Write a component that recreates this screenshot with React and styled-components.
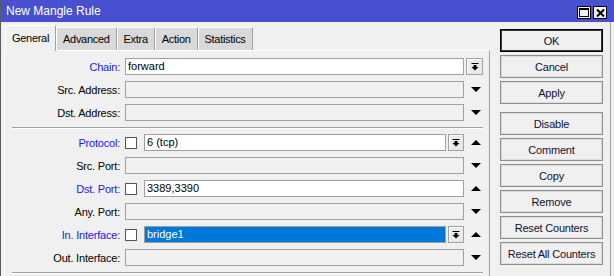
import React from 'react';
import styled, { createGlobalStyle } from 'styled-components';

const GlobalStyle = createGlobalStyle`
  html, body { margin:0; padding:0; background:#f0f0f0; }
  body { font-family:"Liberation Sans", Arial, sans-serif; font-size:11px; color:#000; }
`;

const Window = styled.div`
  width:614px;
  height:276px;
  overflow:hidden;
  display:flex;
  flex-direction:column;
  box-sizing:border-box;
  border-left:1px solid #5a5a5a;
`;

const TitleBar = styled.div`
  height:22px;
  flex:none;
  background:#4950d0;
  display:flex;
  align-items:center;
  justify-content:space-between;
  padding:0 7px 0 5px;
  color:#fff;
  font-size:12px;
`;

const WinButtons = styled.div`
  display:flex;
  gap:2px;
  margin-top:3px;
`;

const WinButton = styled.div`
  width:14px;
  height:13px;
  box-sizing:border-box;
  border:1px solid #000;
  background:#f0f0f0;
  display:flex;
  align-items:center;
  justify-content:center;
`;

const Body = styled.div`
  flex:1;
  display:flex;
  margin-right:3px;
  border-right:1px solid #a0a0a0;
`;

const Left = styled.div`
  width:489px;
  flex:none;
  display:flex;
  flex-direction:column;
`;

const TabStrip = styled.div`
  height:28px;
  flex:none;
  display:flex;
  align-items:flex-end;
  padding-left:4px;
`;

const Tab = styled.div`
  position:relative;
  z-index:${p => (p.$active ? 1 : 0)};
  box-sizing:border-box;
  height:${p => (p.$active ? '26px' : '23px')};
  margin-bottom:${p => (p.$active ? '-1px' : '0')};
  padding:${p => (p.$active ? '5px 6px 0' : '4px 6px 0')};
  background:${p => (p.$active ? '#f0f0f0' : '#d9d9d9')};
  border-top:1px solid #fff;
  border-left:1px solid #fff;
  border-right:1px solid #a0a0a0;
  font-size:11px;
  letter-spacing:-0.3px;
  line-height:14px;
`;

const Panel = styled.div`
  flex:1;
  margin-left:3px;
  box-sizing:border-box;
  border-top:1px solid #fff;
  border-left:1px solid #fff;
  border-right:1px solid #a0a0a0;
  padding:7px 6px 0 0;
`;

const Row = styled.div`
  display:flex;
  align-items:center;
  height:17px;
  margin-bottom:6px;
`;

const Label = styled.div`
  width:115px;
  flex:none;
  text-align:right;
  letter-spacing:-0.2px;
  color:${p => (p.$blue ? '#1a1ae6' : '#000')};
  white-space:nowrap;
`;

const Field = styled.div`
  flex:1;
  display:flex;
  align-items:center;
  height:17px;
  margin-left:5px;
`;

const Check = styled.div`
  width:12px;
  height:12px;
  flex:none;
  box-sizing:border-box;
  border:1px solid #555;
  background:#fff;
  margin-right:7px;
`;

const Input = styled.div`
  flex:1;
  height:17px;
  box-sizing:border-box;
  border:1px solid #a0a0a0;
  background:${p => (p.$selected ? '#0078d7' : p.$filled ? '#fff' : '#f0f0f0')};
  color:${p => (p.$selected ? '#fff' : '#000')};
  padding-left:2px;
  line-height:15px;
  white-space:nowrap;
  overflow:hidden;
`;

const Drop = styled.div`
  width:${p => (p.$wide ? '17px' : '16px')};
  height:17px;
  flex:none;
  margin-left:2px;
  box-sizing:border-box;
  border:1px solid #a0a0a0;
  background:#eaeaea;
  box-shadow:inset 1px 1px 0 #fff;
  display:flex;
  align-items:center;
  justify-content:center;
`;

const Trail = styled.div`
  width:19px;
  flex:none;
  display:flex;
  align-items:center;
  padding-left:${p => (p.$arrow ? '7px' : '0')};
  box-sizing:border-box;
`;

const Separator = styled.div`
  border-top:1px solid #a0a0a0;
  border-bottom:1px solid #fff;
  margin:1px 0 5px 7px;
`;

const Right = styled.div`
  flex:1;
  display:flex;
  flex-direction:column;
  padding:7px 7px 0 10px;
`;

const Button = styled.div`
  height:23px;
  flex:none;
  box-sizing:border-box;
  border:1px solid ${p => (p.$default ? '#000' : '#8e8e8e')};
  box-shadow:inset 0 0 0 1px ${p => (p.$default ? '#3a3a3a' : '#dcdcdc')};
  background:#f0f0f0;
  margin-bottom:${p => (p.$gap ? '8px' : '3px')};
  display:flex;
  align-items:center;
  justify-content:center;
  font-size:11px;
  letter-spacing:-0.2px;
  color:#101030;
`;

const DropIcon = () => (
  <svg width="8" height="8" viewBox="0 0 8 8">
    <rect x="0.5" y="0" width="7" height="1" fill="#000" />
    <rect x="2.5" y="2" width="3" height="2" fill="#000" />
    <polygon points="0.5,4 7.5,4 4,7.5" fill="#000" />
  </svg>
);

const Arrow = ({ up }) => (
  <svg width="10" height="5" viewBox="0 0 10 5">
    {up ? <polygon points="0,5 10,5 5,0" fill="#000" /> : <polygon points="0,0 10,0 5,5" fill="#000" />}
  </svg>
);

const rowsTop = [
  { label: 'Chain', blue: true, value: 'forward', filled: true, trail: 'drop' },
  { label: 'Src. Address', trail: 'down' },
  { label: 'Dst. Address', trail: 'down' },
];

const rowsBottom = [
  { label: 'Protocol', blue: true, check: true, value: '6 (tcp)', filled: true, inlineDrop: true, trail: 'up' },
  { label: 'Src. Port', trail: 'down' },
  { label: 'Dst. Port', blue: true, check: true, value: '3389,3390', filled: true, trail: 'up' },
  { label: 'Any. Port', trail: 'down' },
  { label: 'In. Interface', blue: true, check: true, value: 'bridge1', selected: true, inlineDrop: true, trail: 'up' },
  { label: 'Out. Interface', trail: 'down' },
];

const buttons = ['OK', 'Cancel', 'Apply', 'Disable', 'Comment', 'Copy', 'Remove', 'Reset Counters', 'Reset All Counters'];

function FieldRow({ r }) {
  return (
    <Row>
      <Label $blue={r.blue}>{r.label}:</Label>
      <Field>
        {r.check && <Check />}
        <Input $filled={r.filled} $selected={r.selected}>{r.value}</Input>
        {r.inlineDrop && <Drop><DropIcon /></Drop>}
      </Field>
      <Trail $arrow={r.trail !== 'drop'}>
        {r.trail === 'drop' && <Drop $wide><DropIcon /></Drop>}
        {r.trail === 'down' && <Arrow />}
        {r.trail === 'up' && <Arrow up />}
      </Trail>
    </Row>
  );
}

export default function App() {
  return (
    <>
      <GlobalStyle />
      <Window>
        <TitleBar>
          <span>New Mangle Rule</span>
          <WinButtons>
            <WinButton>
              <svg width="10" height="9" viewBox="0 0 10 9">
                <rect x="0.5" y="0.5" width="9" height="8" fill="none" stroke="#000" />
                <rect x="0" y="0" width="10" height="2" fill="#000" />
              </svg>
            </WinButton>
            <WinButton>
              <svg width="9" height="8" viewBox="0 0 9 8">
                <path d="M1 0.5 L8 7.5 M8 0.5 L1 7.5" stroke="#000" strokeWidth="2" />
              </svg>
            </WinButton>
          </WinButtons>
        </TitleBar>
        <Body>
          <Left>
            <TabStrip>
              <Tab $active>General</Tab>
              <Tab>Advanced</Tab>
              <Tab>Extra</Tab>
              <Tab>Action</Tab>
              <Tab>Statistics</Tab>
            </TabStrip>
            <Panel>
              {rowsTop.map(r => <FieldRow key={r.label} r={r} />)}
              <Separator />
              {rowsBottom.map(r => <FieldRow key={r.label} r={r} />)}
              <Separator />
            </Panel>
          </Left>
          <Right>
            {buttons.map(b => (
              <Button key={b} $default={b === 'OK'} $gap={b === 'Apply'}>{b}</Button>
            ))}
          </Right>
        </Body>
      </Window>
    </>
  );
}
